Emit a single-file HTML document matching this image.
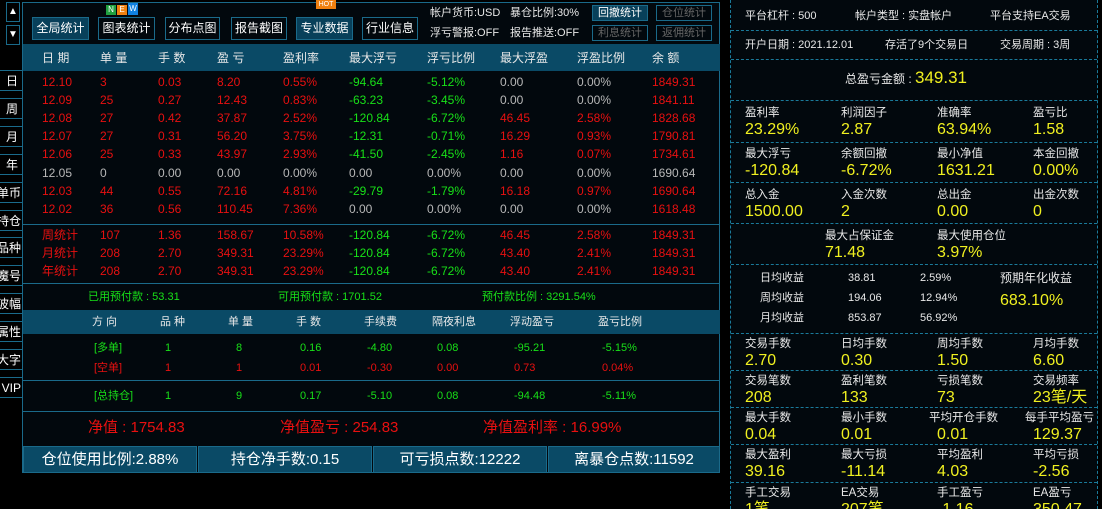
<!DOCTYPE html><html><head><meta charset="utf-8"><style>
*{margin:0;padding:0;box-sizing:border-box}
html,body{width:1102px;height:509px;overflow:hidden}
body{background:#000;position:relative;font-family:"Liberation Sans","Noto Sans CJK SC",sans-serif;font-size:12px;color:#ddd;line-height:14px}
.a{position:absolute;white-space:nowrap;line-height:14px}
.r{color:#e81010}.g{color:#18e018}.w{color:#b8b8b8}.y{color:#f0f020}.wh{color:#e8e8e8}
.btn{position:absolute;top:17px;height:23px;border:1px solid #1a6a8a;color:#fff;font-size:12px;line-height:21px;text-align:center;background:#02080d}
.btn.b{background:#08405a}
.sb{position:absolute;left:0;width:22px;height:21px;border-top:1px solid #1a6a8a;border-bottom:1px solid #1a6a8a;overflow:hidden}
.sb span{position:absolute;right:1px;top:3px;color:#fff;font-size:12px;line-height:14px;white-space:nowrap}
.dl{position:absolute;left:731px;width:366px;border-top:1px dashed #1a7a9a}
.lb{color:#e8e8e8;font-size:12px}
.v{color:#f0f020;font-size:16px;line-height:18px}
.bb{position:absolute;top:446px;height:27px;background:#0a4a66;border:1px solid #1a6a8a;color:#fff;font-size:15px;line-height:25px;text-align:center}
</style></head><body>
<div class="a" style="left:6px;top:2px;width:14px;height:20px;border:1px solid #1a6a8a;color:#fff;font-size:10px;text-align:center;line-height:18px">▲</div>
<div class="a" style="left:6px;top:25px;width:14px;height:20px;border:1px solid #1a6a8a;color:#fff;font-size:10px;text-align:center;line-height:18px">▼</div>
<div class="sb" style="top:70px"><span style="right:4px">日</span></div>
<div class="sb" style="top:98px"><span style="right:4px">周</span></div>
<div class="sb" style="top:126px"><span style="right:4px">月</span></div>
<div class="sb" style="top:154px"><span style="right:4px">年</span></div>
<div class="sb" style="top:182px"><span>单币</span></div>
<div class="sb" style="top:210px"><span>持仓</span></div>
<div class="sb" style="top:237px"><span>品种</span></div>
<div class="sb" style="top:265px"><span>魔号</span></div>
<div class="sb" style="top:293px"><span>波幅</span></div>
<div class="sb" style="top:321px"><span>属性</span></div>
<div class="sb" style="top:349px"><span>大字</span></div>
<div class="sb" style="top:377px"><span>VIP</span></div>
<div class="a" style="left:22px;top:2px;width:698px;height:471px;background:#02080d;border:1px solid #1a6a8a"></div>
<div class="btn b" style="left:32px;width:57px">全局统计</div>
<div class="btn" style="left:98px;width:57px">图表统计</div>
<div class="a" style="left:106px;top:5px;width:10px;height:10px;background:#20a040;color:#fff;font-size:8px;text-align:center;line-height:10px">N</div>
<div class="a" style="left:117px;top:5px;width:10px;height:10px;background:#f08010;color:#fff;font-size:8px;text-align:center;line-height:10px">E</div>
<div class="a" style="left:128px;top:3px;width:10px;height:12px;background:#1080e0;color:#fff;font-size:8px;text-align:center;line-height:12px">W</div>
<div class="btn" style="left:165px;width:55px">分布点图</div>
<div class="btn" style="left:231px;width:56px">报告截图</div>
<div class="btn b" style="left:296px;width:57px">专业数据</div>
<div class="a" style="left:316px;top:0px;width:20px;height:9px;background:#f08010;color:#fff;font-size:7px;text-align:center;line-height:9px">HOT</div>
<div class="btn" style="left:362px;width:56px">行业信息</div>
<div class="a wh" style="left:430px;top:6px;font-size:11px">帐户货币:USD</div>
<div class="a wh" style="left:510px;top:6px;font-size:11px">暴仓比例:30%</div>
<div class="a wh" style="left:430px;top:26px;font-size:11px">浮亏警报:OFF</div>
<div class="a wh" style="left:510px;top:26px;font-size:11px">报告推送:OFF</div>
<div class="a" style="left:592px;top:5px;width:56px;height:16px;border:1px solid #1a6a8a;background:#08405a;color:#fff;text-align:center;line-height:14px;font-size:11px">回撤统计</div>
<div class="a" style="left:656px;top:5px;width:56px;height:16px;border:1px solid #1a6a8a;color:#666;text-align:center;line-height:14px;font-size:11px">仓位统计</div>
<div class="a" style="left:592px;top:25px;width:56px;height:16px;border:1px solid #1a6a8a;color:#666;text-align:center;line-height:14px;font-size:11px">利息统计</div>
<div class="a" style="left:656px;top:25px;width:56px;height:16px;border:1px solid #1a6a8a;color:#666;text-align:center;line-height:14px;font-size:11px">返佣统计</div>
<div class="a" style="left:23px;top:44px;width:697px;height:27px;background:#0a4a66"></div>
<div class="a" style="left:23px;top:224px;width:697px;border-top:1px solid #1a6a8a"></div>
<div class="a" style="left:23px;top:283px;width:697px;border-top:1px solid #1a6a8a"></div>
<div class="a g" style="left:88px;top:290px;font-size:11px">已用预付款 : 53.31</div>
<div class="a g" style="left:278px;top:290px;font-size:11px">可用预付款 : 1701.52</div>
<div class="a g" style="left:482px;top:290px;font-size:11px">预付款比例 : 3291.54%</div>
<div class="a" style="left:23px;top:310px;width:697px;height:24px;background:#0a4a66"></div>
<div class="a" style="left:23px;top:380px;width:697px;border-top:1px solid #1a6a8a"></div>
<div class="a" style="left:23px;top:411px;width:697px;border-top:1px solid #1a6a8a"></div>
<div class="a r" style="left:88px;top:419px;font-size:15px;line-height:18px">净值 : 1754.83</div>
<div class="a r" style="left:280px;top:419px;font-size:15px;line-height:18px">净值盈亏 : 254.83</div>
<div class="a r" style="left:483px;top:419px;font-size:15px;line-height:18px">净值盈利率 : 16.99%</div>
<div class="bb" style="left:23px;width:174px">仓位使用比例:2.88%</div>
<div class="bb" style="left:198px;width:174px">持仓净手数:0.15</div>
<div class="bb" style="left:373px;width:174px">可亏损点数:12222</div>
<div class="bb" style="left:548px;width:172px">离暴仓点数:11592</div>
<div id="tb"></div>
<div class="a" style="left:730px;top:0;width:368px;height:509px;background:#02080d;border-left:1px dashed #1a7a9a;border-right:1px dashed #1a7a9a"></div>
<div class="dl" style="top:30px"></div><div class="dl" style="top:59px"></div><div class="dl" style="top:100px"></div><div class="dl" style="top:142px"></div><div class="dl" style="top:182px"></div><div class="dl" style="top:223px"></div><div class="dl" style="top:264px"></div><div class="dl" style="top:333px"></div><div class="dl" style="top:370px"></div><div class="dl" style="top:407px"></div><div class="dl" style="top:444px"></div><div class="dl" style="top:482px"></div>
<div class="a lb" style="left:745px;top:9px;font-size:11px">平台杠杆 : 500</div>
<div class="a lb" style="left:855px;top:9px;font-size:11px">帐户类型 : 实盘帐户</div>
<div class="a lb" style="left:990px;top:9px;font-size:11px">平台支持EA交易</div>
<div class="a lb" style="left:745px;top:38px;font-size:11px">开户日期 : 2021.12.01</div>
<div class="a lb" style="left:885px;top:38px;font-size:11px">存活了9个交易日</div>
<div class="a lb" style="left:1000px;top:38px;font-size:11px">交易周期 : 3周</div>
<div class="a lb" style="left:845px;top:72px">总盈亏金额 :</div>
<div class="a y" style="left:915px;top:68px;font-size:17px;line-height:20px">349.31</div>
<div id="rg"></div>
<div class="a lb" style="left:760px;top:271px;font-size:11px">日均收益</div><div class="a lb" style="left:848px;top:271px;font-size:11px">38.81</div><div class="a lb" style="left:920px;top:271px;font-size:11px">2.59%</div>
<div class="a lb" style="left:760px;top:291px;font-size:11px">周均收益</div><div class="a lb" style="left:848px;top:291px;font-size:11px">194.06</div><div class="a lb" style="left:920px;top:291px;font-size:11px">12.94%</div>
<div class="a lb" style="left:760px;top:311px;font-size:11px">月均收益</div><div class="a lb" style="left:848px;top:311px;font-size:11px">853.87</div><div class="a lb" style="left:920px;top:311px;font-size:11px">56.92%</div>
<div class="a lb" style="left:1000px;top:271px">预期年化收益</div>
<div class="a y" style="left:1000px;top:292px;font-size:16px;line-height:18px">683.10%</div>
<script>
var h='',cols=[42,100,158,217,283,349,427,500,577,652];
['日 期','单 量','手 数','盈 亏','盈利率','最大浮亏','浮亏比例','最大浮盈','浮盈比例','余 额'].forEach((t,i)=>h+=`<div class="a wh" style="left:${cols[i]}px;top:51px">${t}</div>`);
var R=[['12.10','3','0.03','8.20','0.55%','-94.64','-5.12%','0.00','0.00%','1849.31'],['12.09','25','0.27','12.43','0.83%','-63.23','-3.45%','0.00','0.00%','1841.11'],['12.08','27','0.42','37.87','2.52%','-120.84','-6.72%','46.45','2.58%','1828.68'],['12.07','27','0.31','56.20','3.75%','-12.31','-0.71%','16.29','0.93%','1790.81'],['12.06','25','0.33','43.97','2.93%','-41.50','-2.45%','1.16','0.07%','1734.61'],['12.05','0','0.00','0.00','0.00%','0.00','0.00%','0.00','0.00%','1690.64'],['12.03','44','0.55','72.16','4.81%','-29.79','-1.79%','16.18','0.97%','1690.64'],['12.02','36','0.56','110.45','7.36%','0.00','0.00%','0.00','0.00%','1618.48'],
['周统计','107','1.36','158.67','10.58%','-120.84','-6.72%','46.45','2.58%','1849.31'],['月统计','208','2.70','349.31','23.29%','-120.84','-6.72%','43.40','2.41%','1849.31'],['年统计','208','2.70','349.31','23.29%','-120.84','-6.72%','43.40','2.41%','1849.31']];
var ys=[75,93,111,129,147,166,184,202,228,246,264];
R.forEach((r,j)=>r.forEach((t,i)=>{var c='r';if(j==5)c='w';else if(i==5||i==6)c=(t=='0.00'||t=='0.00%')?'w':'g';else if(i==7||i==8)c=(t=='0.00'||t=='0.00%')?'w':'r';h+=`<div class="a ${c}" style="left:${cols[i]}px;top:${ys[j]}px;font-size:12px">${t}</div>`;}));
var c2=[92,160,228,296,364,432,510,598];
['方 向','品 种','单 量','手 数','手续费','隔夜利息','浮动盈亏','盈亏比例'].forEach((t,i)=>h+=`<div class="a wh" style="left:${c2[i]}px;top:315px;font-size:11px">${t}</div>`);
[[['[多单]','1','8','0.16','-4.80','0.08','-95.21','-5.15%'],341,'g'],[['[空单]','1','1','0.01','-0.30','0.00','0.73','0.04%'],361,'r'],[['[总持仓]','1','9','0.17','-5.10','0.08','-94.48','-5.11%'],389,'g']].forEach(x=>x[0].forEach((t,i)=>h+=`<div class="a ${x[2]}" style="left:${c2[i]+(i==0?2:i==1?5:i==2?8:i==5?5:i==3?4:i==4?3:4)}px;top:${x[1]}px;font-size:11px">${t}</div>`));
document.getElementById('tb').innerHTML=h;
var g='',rc=[745,841,937,1033];
[[106,['盈利率','利润因子','准确率','盈亏比'],['23.29%','2.87','63.94%','1.58']],[147,['最大浮亏','余额回撤','最小净值','本金回撤'],['-120.84','-6.72%','1631.21','0.00%']],[188,['总入金','入金次数','总出金','出金次数'],['1500.00','2','0.00','0']],
[337,['交易手数','日均手数','周均手数','月均手数'],['2.70','0.30','1.50','6.60']],[374,['交易笔数','盈利笔数','亏损笔数','交易频率'],['208','133','73','23笔/天']],[411,['最大手数','最小手数','平均开仓手数','每手平均盈亏'],['0.04','0.01','0.01','129.37']],[448,['最大盈利','最大亏损','平均盈利','平均亏损'],['39.16','-11.14','4.03','-2.56']],[486,['手工交易','EA交易','手工盈亏','EA盈亏'],['1笔','207笔','-1.16','350.47']]].forEach(b=>b[1].forEach((t,i)=>{var x=rc[i];if(b[0]==411&&i==2)x=929;if(b[0]==411&&i==3)x=1025;g+=`<div class="a lb" style="left:${x}px;top:${b[0]}px;font-size:11.5px">${t}</div><div class="a v" style="left:${rc[i]}px;top:${b[0]+15}px">${b[2][i]}</div>`;}));
g+=`<div class="a lb" style="left:825px;top:229px;font-size:11.5px">最大占保证金</div><div class="a v" style="left:825px;top:244px">71.48</div><div class="a lb" style="left:937px;top:229px;font-size:11.5px">最大使用仓位</div><div class="a v" style="left:937px;top:244px">3.97%</div>`;
document.getElementById('rg').innerHTML=g;
</script>
</body></html>
